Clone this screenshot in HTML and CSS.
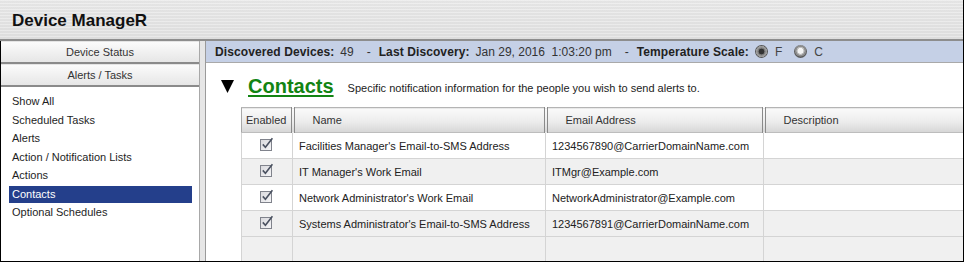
FILE: index.html
```html
<!DOCTYPE html>
<html>
<head>
<meta charset="utf-8">
<link rel="stylesheet" href="styles.css">
</head>
<body>
<div class="app">
  <header class="titlebar">Device ManageR</header>
  <div class="content">
    <aside class="sidebar">
      <div class="sidebtn">Device Status</div>
      <div class="sidebtn">Alerts / Tasks</div>
      <ul class="nav">
        <li>Show All</li>
        <li>Scheduled Tasks</li>
        <li>Alerts</li>
        <li>Action / Notification Lists</li>
        <li>Actions</li>
        <li class="active">Contacts</li>
        <li>Optional Schedules</li>
      </ul>
    </aside>
    <div class="gap"></div>
    <main class="main">
      <div class="infobar">
        <b>Discovered Devices:</b><span class="val">49</span><span class="dash">-</span>
        <b>Last Discovery:</b><span class="val">Jan 29, 2016&nbsp;&nbsp;1:03:20 pm</span><span class="dash">-</span>
        <b>Temperature Scale:</b>
        <span class="radio on"></span><span class="rlabel">F</span>
        <span class="radio"></span><span class="rlabel">C</span>
      </div>
      <div class="heading">
        <svg class="tri" width="13" height="13" viewBox="0 0 13 13"><path d="M0 0 H13 L6.5 13 Z" fill="#000"/></svg>
        <span class="htitle">Contacts</span>
        <span class="hdesc">Specific notification information for the people you wish to send alerts to.</span>
      </div>
      <svg width="0" height="0" class="defs"><defs><linearGradient id="g1" x1="0" y1="0" x2="1" y2="1"><stop offset="0" stop-color="#d8d8dc"/><stop offset="1" stop-color="#f6f6f8"/></linearGradient></defs></svg>
      <table class="grid">
        <colgroup>
          <col class="c1"><col class="c2"><col class="c3"><col class="c4">
        </colgroup>
        <thead>
          <tr><th class="th-en">Enabled</th><th>Name</th><th>Email Address</th><th class="last">Description</th></tr>
        </thead>
        <tbody>
          <tr><td class="chk"><svg width="14" height="14" viewBox="0 0 14 14"><rect x="0.5" y="2.5" width="11" height="11" fill="url(#g1)" stroke="#80838c"/><path d="M2.8 7.4 L5.4 10.2 L12.4 1.3" fill="none" stroke="#4a5160" stroke-width="1.6"/></svg></td><td>Facilities Manager's Email-to-SMS Address</td><td>1234567890@CarrierDomainName.com</td><td></td></tr>
          <tr class="alt"><td class="chk"><svg width="14" height="14" viewBox="0 0 14 14"><rect x="0.5" y="2.5" width="11" height="11" fill="url(#g1)" stroke="#80838c"/><path d="M2.8 7.4 L5.4 10.2 L12.4 1.3" fill="none" stroke="#4a5160" stroke-width="1.6"/></svg></td><td>IT Manager's Work Email</td><td>ITMgr@Example.com</td><td></td></tr>
          <tr><td class="chk"><svg width="14" height="14" viewBox="0 0 14 14"><rect x="0.5" y="2.5" width="11" height="11" fill="url(#g1)" stroke="#80838c"/><path d="M2.8 7.4 L5.4 10.2 L12.4 1.3" fill="none" stroke="#4a5160" stroke-width="1.6"/></svg></td><td>Network Administrator's Work Email</td><td>NetworkAdministrator@Example.com</td><td></td></tr>
          <tr class="alt"><td class="chk"><svg width="14" height="14" viewBox="0 0 14 14"><rect x="0.5" y="2.5" width="11" height="11" fill="url(#g1)" stroke="#80838c"/><path d="M2.8 7.4 L5.4 10.2 L12.4 1.3" fill="none" stroke="#4a5160" stroke-width="1.6"/></svg></td><td>Systems Administrator's Email-to-SMS Address</td><td>1234567891@CarrierDomainName.com</td><td></td></tr>
          <tr class="alt empty"><td></td><td></td><td></td><td></td></tr>
        </tbody>
      </table>
    </main>
  </div>
</div>
</body>
</html>
```
FILE: styles.css
```css
* { box-sizing: border-box; }
html, body { margin: 0; padding: 0; }
body {
  width: 964px;
  height: 262px;
  overflow: hidden;
  font-family: "Liberation Sans", Arial, sans-serif;
  background: #fff;
}
.app {
  width: 964px;
  height: 262px;
  display: flex;
  flex-direction: column;
  border-right: 1px solid #000;
}
.titlebar {
  height: 41px;
  flex: none;
  padding: 11px 0 0 12px;
  font-size: 17px;
  font-weight: bold;
  color: #111;
  background:
    repeating-linear-gradient(180deg, rgba(255,255,255,0.25) 0 1px, rgba(0,0,0,0.02) 1px 3px),
    linear-gradient(180deg, #e9e9e9, #e1e1e1);
  border-bottom: 2px solid #8d8d8d;
}
.content {
  flex: 1;
  display: flex;
  min-height: 0;
  border-left: 1px solid #000;
  border-bottom: 1px solid #000;
}
.sidebar {
  width: 199px;
  flex: none;
  border-right: 1px solid #a8a8a8;
  background: #fff;
}
.sidebtn {
  height: 23px;
  text-align: center;
  font-size: 11px;
  line-height: 20px;
  color: #333;
  background: linear-gradient(180deg, #fbfbfb, #e6e6e6);
  border-bottom: 2px solid #8a8a8a;
  border-top: 1px solid #e4e4e4;
}
.nav {
  list-style: none;
  margin: 0;
  padding: 6px 7px 0 8px;
}
.nav li {
  font-size: 11px;
  line-height: 17px;
  height: 17px;
  margin-bottom: 1.5px;
  padding-left: 3px;
  color: #1e1e1e;
}
.nav li.active {
  background: #243f8b;
  color: #fff;
}
.gap {
  width: 5px;
  flex: none;
  background: #e6e6e6;
}
.main {
  flex: 1;
  min-width: 0;
  overflow: hidden;
  border-left: 1px solid #9a9a9a;
  background: #fff;
  display: flex;
  flex-direction: column;
}
.defs { position: absolute; }
.infobar {
  height: 22px;
  flex: none;
  background: #c5d0e6;
  border-bottom: 1px solid #a9a9a9;
  padding-left: 9px;
  display: flex;
  align-items: center;
  font-size: 12px;
  color: #333;
  white-space: nowrap;
}
.infobar b { color: #222; letter-spacing: 0.1px; }
.infobar .val { margin-left: 6px; }
.infobar .dash { margin: 0 8px 0 13px; }
.radio {
  width: 13px;
  height: 13px;
  border-radius: 50%;
  margin-left: 6px;
  background: radial-gradient(circle at 50% 45%, #f4f4f4 0 2.6px, #bdbdbd 3.2px 3.8px, #8c8c8c 4.3px 5.4px, #5c5c5c 5.9px 6.5px);
}
.radio.on {
  background: radial-gradient(circle at 50% 50%, #333 0 2.6px, #7d7d7d 3.2px 3.8px, #9a9a9a 4.3px 5.4px, #555 5.9px 6.5px);
}
.rlabel { margin-left: 7px; color: #444; }
.rlabel + .radio { margin-left: 12px; }
.heading {
  height: 44px;
  flex: none;
  display: flex;
  align-items: center;
  padding: 2px 0 0 15px;
  white-space: nowrap;
}
.tri { flex: none; margin-top: 1px; }
.htitle {
  margin-left: 14px;
  font-size: 20px;
  font-weight: bold;
  color: #128413;
  text-decoration: underline;
  text-underline-offset: 2px;
}
.hdesc {
  margin-left: 14px;
  font-size: 11px;
  color: #222;
  padding-top: 4px;
}
.grid {
  margin-left: 35px;
  width: 722px;
  border-collapse: collapse;
  table-layout: fixed;
  font-size: 11px;
  color: #222;
}
.c1 { width: 51px; }
.c2 { width: 253px; }
.c3 { width: 218px; }
.c4 { width: 200px; }
.grid th {
  height: 25px;
  font-weight: normal;
  text-align: left;
  color: #333;
  padding: 0 0 0 18px;
  background: linear-gradient(180deg, #fafafa 0%, #ececec 55%, #d6d6d6 100%);
  border-top: 1px solid #b4b4b4;
  border-bottom: 1px solid #bdbdbd;
  border-right: 4px double #8a8a8a;
}
.grid th.th-en { padding-left: 4px; border-left: 1px solid #a8a8a8; }
.grid th.last { border-right: none; }
.grid td {
  height: 26px;
  padding: 0 0 0 6px;
  border-right: 1px solid #d4d4d4;
  border-bottom: 1px solid #d4d4d4;
  white-space: nowrap;
  overflow: hidden;
}
.grid td:first-child { border-left: 1px solid #d4d4d4; }
.grid td:last-child { border-right: none; }
.grid tr.alt td { background: #f0f0f0; }
.grid tr.empty td { height: 25px; border-bottom: none; }
.grid td.chk { padding: 0; text-align: center; }
.grid td.chk svg { display: block; margin: 0 auto; position: relative; top: -2px; }
```
